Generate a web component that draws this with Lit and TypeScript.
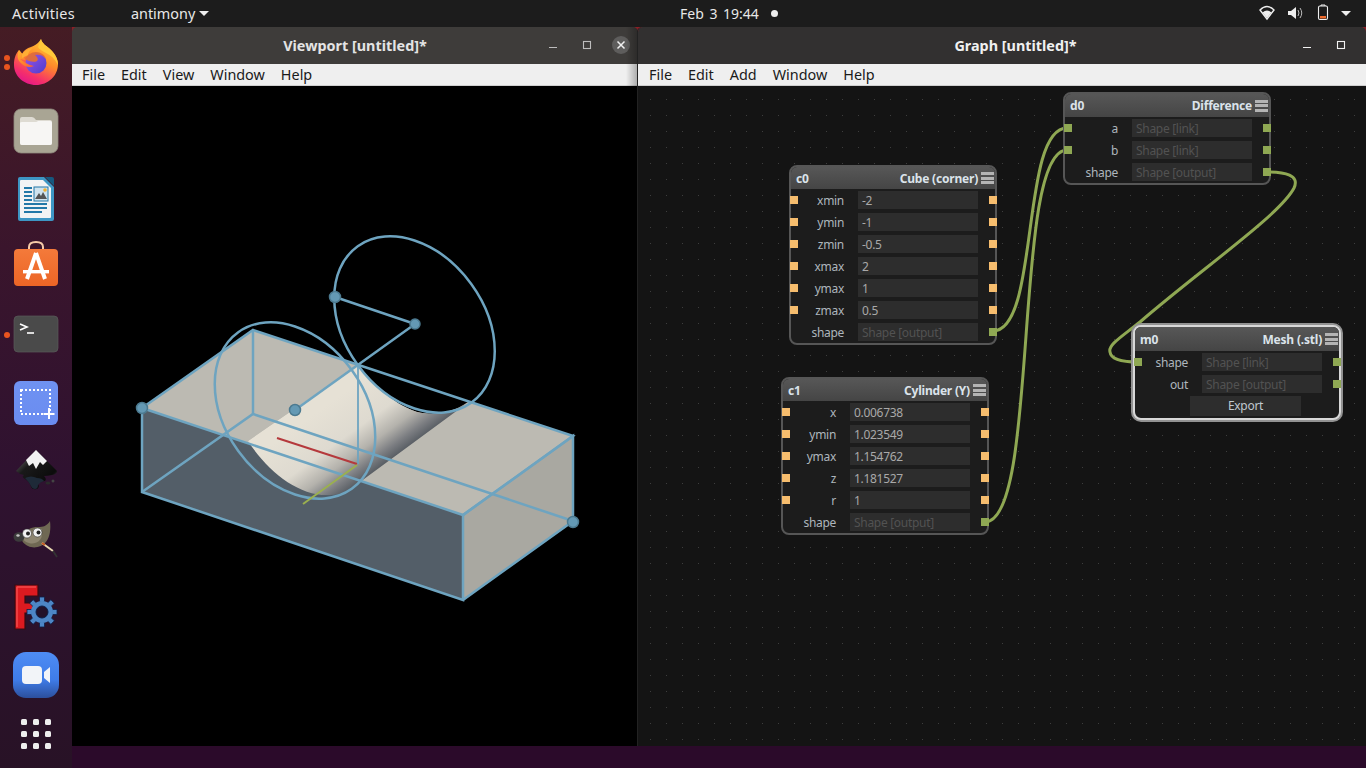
import { LitElement, html, css } from "lit";
import { customElement } from "lit/decorators.js";

type Row = { label: string; value: string; ph?: boolean; green?: boolean; noIn?: boolean };
type NodeData = { id: string; title: string; x: number; y: number; head: number; rows: Row[]; selected?: boolean; button?: string };

const LINK = (label: string, value: string): Row => ({ label, value, ph: true, green: true });
const OUT = (label: string, value: string): Row => ({ label, value, ph: true, green: true, noIn: true });
const VAL = (label: string, value: string): Row => ({ label, value });

const NODES: NodeData[] = [
  { id: "d0", title: "Difference", x: 1063, y: 92, head: 23, rows: [LINK("a", "Shape [link]"), LINK("b", "Shape [link]"), OUT("shape", "Shape [output]")] },
  { id: "c0", title: "Cube (corner)", x: 789, y: 165, head: 22, rows: [VAL("xmin", "-2"), VAL("ymin", "-1"), VAL("zmin", "-0.5"), VAL("xmax", "2"), VAL("ymax", "1"), VAL("zmax", "0.5"), OUT("shape", "Shape [output]")] },
  { id: "c1", title: "Cylinder (Y)", x: 781, y: 377, head: 22, rows: [VAL("x", "0.006738"), VAL("ymin", "1.023549"), VAL("ymax", "1.154762"), VAL("z", "1.181527"), VAL("r", "1"), OUT("shape", "Shape [output]")] },
  { id: "m0", title: "Mesh (.stl)", x: 1133, y: 325, head: 24, selected: true, button: "Export", rows: [LINK("shape", "Shape [link]"), OUT("out", "Shape [output]")] },
];

const ELLIPSE = (cx: number, cy: number) => `matrix(80.25,26.75,0,-84,${cx},${cy})`;

@customElement("app-root")
export class AppRoot extends LitElement {
  static styles = css`
    :host { display: block; width: 1366px; height: 768px; overflow: hidden; font-family: "Noto Sans", sans-serif; background: #2b0a2a; }
    .topbar { height: 27px; background: #1c1c1c; color: #e8e8e8; font-size: 14.4px; display: flex; align-items: center; }
    .tb-left { display: flex; align-items: center; padding-left: 12px; width: 668px; flex: none; }
    .act { letter-spacing: .3px; }
    .app { margin-left: 56px; display: flex; align-items: center; gap: 4px; }
    .caret { width: 0; height: 0; border-left: 5px solid transparent; border-right: 5px solid transparent; border-top: 5px solid #eee; }
    .clock { display: flex; align-items: center; gap: 12px; word-spacing: 2px; font-size: 14px; }
    .clock i { width: 7px; height: 7px; border-radius: 50%; background: #eee; }
    .tb-right { margin-left: auto; display: flex; align-items: center; height: 27px; padding-right: 15px; }
    .tb-right svg { display: block; }
    .main { display: flex; height: 741px; }
    .dock { width: 72px; flex: none; padding-top: 2px; box-sizing: border-box; background: linear-gradient(180deg, #451c24 0%, #3a152c 30%, #2f1230 60%, #281226 100%); display: flex; flex-direction: column; }
    .dock svg { display: block; width: 72px; height: 68px; flex: none; }
    .grid9 { margin-top: 10px; display: grid; grid-template-columns: repeat(3, 6px); gap: 6px; justify-content: center; }
    .grid9 i { width: 6px; height: 6px; border-radius: 1.5px; background: #eee; }
    .desk { flex: 1; display: flex; flex-direction: column; background: linear-gradient(180deg, #8d1f27 0, #8d1f27 6px, #2b0a2a 6px); }
    .wins { display: flex; height: 719px; }
    .win { display: flex; flex-direction: column; position: relative; border-radius: 5px 5px 0 0; overflow: hidden; }
    .vp { width: 566px; }
    .gr { width: 728px; box-shadow: -1px 0 0 #222; }
    .title { height: 37px; flex: none; display: flex; align-items: center; justify-content: center; color: #f0f0f0; font-weight: 700; font-size: 14.4px; position: relative; }
    .vp .title { background: #3e3c3a; color: #e4e4e4; }
    .gr .title { background: #323030; padding-left: 27px; }
    .wbtns { position: absolute; inset: 0; pointer-events: none; }
    .menu { height: 22px; flex: none; background: #efefef; border-bottom: 1px solid #cfcfcf; box-sizing: border-box; display: flex; gap: 16px; padding-left: 10px; align-items: center; color: #1a1a1a; font-size: 14.4px; }
    .gr .menu { padding-left: 11px; }
    .canvas { flex: 1; position: relative; }
    .vp .canvas { background: #000; }
    .vp .canvas svg { position: absolute; inset: 0; width: 566px; height: 660px; display: block; }
    .shade { position: absolute; top: 0; right: 0; width: 12px; height: 59px; background: linear-gradient(90deg, rgba(0,0,0,0), rgba(0,0,0,.3)); }
    .gr .canvas { background-color: #141414; }
    .dots { position: absolute; inset: 0; background-image: radial-gradient(circle at 0.5px 0.5px, #3e3e3e 0.6px, transparent 0.7px); background-size: 16px 16px; background-position: 12px 13px; }
    .wires { position: absolute; inset: 0; width: 728px; height: 660px; display: block; }
    .node { position: absolute; width: 208px; box-sizing: border-box; background: #1c1c1c; border: 2px solid #565656; border-radius: 8px; color: #aeb6bd; font-size: 12px; letter-spacing: -.3px; }
    .node.sel { border-color: #d8d8d8; box-shadow: 0 0 0 2px #929292; }
    .head { display: flex; align-items: center; padding: 0 1px 0 5px; background: linear-gradient(180deg, #575757, #454545); border-radius: 6px 6px 0 0; color: #dbe3ea; font-weight: 700; font-size: 12px; letter-spacing: -.2px; }
    .head .ttl { margin-left: auto; margin-right: 3px; }
    .burger { width: 13px; height: 12px; display: flex; flex-direction: column; justify-content: space-between; }
    .burger i { height: 3px; background: #b4b4b4; display: block; }
    .rows { display: flex; flex-direction: column; gap: 4px; padding: 2px 0; }
    .row { display: flex; align-items: center; height: 18px; margin: 0 -2px 0 -1px; position: relative; }
    .port { width: 8px; height: 8px; flex: none; background: #f6bd6e; }
    .port.g { background: #8fa853; }
    .port.none { background: transparent; }
    .lbl { flex: 1; text-align: right; margin-right: 14px; line-height: 17px; padding-top: 1px; }
    .inp { width: 120px; height: 18px; flex: none; box-sizing: border-box; background: #2d2d2d; padding: 1px 0 0 4px; line-height: 17px; margin-right: 11px; color: #a9a9a9; }
    .inp.ph { color: #525252; }
    .btn { width: 111px; height: 20px; margin: -1px 0 0 55px; background: #2d2d2d; color: #c0c8cf; text-align: center; line-height: 20px; }
    .strip { height: 22px; }
  `;

  renderNode(n: NodeData) {
    return html`<div class="node ${n.selected ? "sel" : ""}" style="left:${n.x - 638}px;top:${n.y - 86}px">
      <div class="head" style="height:${n.head}px"><span>${n.id}</span><span class="ttl">${n.title}</span><span class="burger"><i></i><i></i><i></i></span></div>
      <div class="rows">
        ${n.rows.map((r) => html`<div class="row">
          <span class="port ${r.noIn ? "none" : r.green ? "g" : ""}"></span>
          <span class="lbl">${r.label}</span>
          <span class="inp ${r.ph ? "ph" : ""}">${r.value}</span>
          <span class="port ${r.green ? "g" : ""}"></span>
        </div>`)}
        ${n.button ? html`<div class="btn">${n.button}</div>` : ""}
      </div>
    </div>`;
  }

  dock() {
    return html`<div class="dock">
      <!-- firefox -->
      <svg viewBox="0 0 72 68">
        <defs>
          <linearGradient id="ff1" x1="0.8" y1="0" x2="0.3" y2="1"><stop offset="0" stop-color="#ffd43a"/><stop offset=".45" stop-color="#ff8a2a"/><stop offset=".8" stop-color="#f5306a"/><stop offset="1" stop-color="#e3178a"/></linearGradient>
          <linearGradient id="ff2" x1="0" y1="0" x2="1" y2="1"><stop offset="0" stop-color="#9a55e8"/><stop offset="1" stop-color="#4d3ccc"/></linearGradient>
          <linearGradient id="ff3" x1="0" y1="0" x2="1" y2="1"><stop offset="0" stop-color="#ffb52e"/><stop offset="1" stop-color="#ff5a2e"/></linearGradient>
        </defs>
        <circle cx="7" cy="29" r="3" fill="#e9541f"/><circle cx="7" cy="38" r="3" fill="#e9541f"/>
        <path d="M41 10 C42 15 47 17 51 21 C56 26 58 31 58 35 C58 47 48 56 36 56 C24 56 14 47 14 36 C14 30 15 26 19 21 L22 25 C24 21 27 19 31 18 C34 17 38 15 41 10Z" fill="url(#ff1)"/>
        <path d="M41 10 C42 15 47 17 51 21 C56 26 58 31 58 36 C55 30 51 26 46 24 C42 22 39 20 38 18 C39 16 40 13 41 10Z" fill="#ffc93a"/>
        <circle cx="36" cy="34" r="10.500" fill="url(#ff2)"/>
        <path d="M36 23 C41 23 45 26 46 30 C43 26 39 25 35 26 C37 28 39 30 37 32 C34 34 28 32 25 30 C27 26 31 23 36 23Z" fill="#e8702e" opacity=".9"/>
        <path d="M19 21 C22 24 24 27 25 31 L20 30 C24 33 28 36 34 37 C28 40 21 36 18 30 C17 27 18 24 19 21Z" fill="url(#ff3)"/>
        <path d="M22 25 C25 21 29 19 33 19 C30 21 28 24 28 26 C26 27 24 28 22 29Z" fill="#ffae35"/>
      </svg>
      <!-- files -->
      <svg viewBox="0 0 72 68">
        <rect x="14" y="12" width="44" height="44" rx="7" fill="#a9a594" stroke="#8f8c7e" stroke-width=".8"/>
        <path d="M20 22 Q20 20 22 20 H32 Q34 20 36 23 H50 Q52 23 52 25 V46 Q52 48 50 48 H22 Q20 48 20 46Z" fill="#dedbd2"/>
        <path d="M20 26 Q20 25 22 25 L36 25 Q37 25 38 24 H50 Q52 24 52 26 V46 Q52 48 50 48 H22 Q20 48 20 46Z" fill="#f7f6f4"/>
      </svg>
      <!-- writer -->
      <svg viewBox="0 0 72 68">
        <path d="M20 12 H44 L54 22 V54 Q54 56 52 56 H20 Q18 56 18 54 V14 Q18 12 20 12Z" fill="#3d96c4"/>
        <path d="M21 15 H43 L51 23 V52 Q51 53 50 53 H21 Q20 53 20 52 V16 Q20 15 21 15Z" fill="#f2f3f4"/>
        <path d="M45 12 H52 Q54 12 54 14 V21Z" fill="#16587f"/>
        <path d="M24 23 H32 M24 27 H32 M24 31 H32 M24 35 H32 M24 39 H47 M24 43 H47 M24 47 H42" stroke="#2278a8" stroke-width="2"/>
        <rect x="34" y="22" width="14" height="14" fill="#cfe3ee" stroke="#2278a8"/>
        <path d="M35 34 L39 28 L41 31 L43 27 L47 34Z" fill="#555"/><circle cx="45" cy="25" r="1.800" fill="#f0b030"/>
      </svg>
      <!-- software -->
      <svg viewBox="0 0 72 68">
        <defs><linearGradient id="sw" x1="0" y1="0" x2="0" y2="1"><stop offset="0" stop-color="#f47a3a"/><stop offset="1" stop-color="#ec6526"/></linearGradient></defs>
        <path d="M29 17 V14 Q29 9 36 9 Q43 9 43 14 V17" fill="none" stroke="#f6cba8" stroke-width="2"/>
        <rect x="14" y="16" width="44" height="37" rx="4" fill="url(#sw)"/>
        <path d="M36 20 L27 46 M36 20 L45 46" stroke="#fff" stroke-width="4" fill="none"/>
        <rect x="23" y="37" width="26" height="3.400" fill="#fff"/>
      </svg>
      <!-- terminal -->
      <svg viewBox="0 0 72 68">
        <rect x="14" y="15" width="44" height="36" rx="4" fill="#4a4a4a" stroke="#5a5a5a" stroke-width=".7"/>
        <path d="M20 23 L27 26 L20 29" fill="none" stroke="#fff" stroke-width="1.600"/>
        <path d="M27 32 H34" stroke="#fff" stroke-width="1.600"/>
        <circle cx="7" cy="34" r="3" fill="#e9541f"/>
      </svg>
      <!-- screenshot -->
      <svg viewBox="0 0 72 68">
        <defs><linearGradient id="ss" x1="0" y1="0" x2="0" y2="1"><stop offset="0" stop-color="#6f92f2"/><stop offset="1" stop-color="#6a8cf0"/></linearGradient></defs>
        <rect x="14" y="12" width="44" height="44" rx="6" fill="url(#ss)"/>
        <rect x="21" y="21" width="29" height="24" fill="none" stroke="#fff" stroke-width="2" stroke-dasharray="2 2"/>
        <path d="M49 39 V50 M43.500 45 H54.500" stroke="#fff" stroke-width="2"/>
      </svg>
      <!-- inkscape -->
      <svg viewBox="0 0 72 68">
        <defs><linearGradient id="ik" x1="0" y1="0" x2="1" y2="1"><stop offset="0" stop-color="#8a8a8a"/><stop offset=".35" stop-color="#1a1a1a"/><stop offset=".75" stop-color="#0c0c0c"/><stop offset="1" stop-color="#6a6a6a"/></linearGradient></defs>
        <path d="M36 13 L57 34 Q57 37 52 38 Q47 39 44 39 Q47 42 45 44 Q40 44 38 47 Q40 50 37 52 Q32 53 31 50 Q30 45 25 42 Q21 40 24 38 Q19 37 16 34Z" fill="url(#ik)"/>
        <path d="M36 13 L47 24 L43 28 L40 25 L36 32 L33 26 L29 29 L26 23Z" fill="#f2f2f2"/>
        <path d="M25 41 Q31 38 37 41 Q42 41 44 44 Q40 45 38 48 Q38 52 35 52 Q32 52 31 49 Q29 45 25 41Z" fill="#1e2a38"/>
        <ellipse cx="48" cy="46" rx="2.500" ry="1.500" fill="#2a2a2a"/><circle cx="53" cy="44" r="1.500" fill="#444"/>
      </svg>
      <!-- gimp -->
      <svg viewBox="0 0 72 68">
        <path d="M50 16 C51 24 50 32 46 37 C42 42 34 44 28 41 C24 39 21 36 21 31 C26 24 32 22 38 22 C43 22 47 21 50 16Z" fill="#6f6853"/>
        <path d="M22 31 C28 24 38 24 42 29 C42 36 35 40 29 38 C25 37 22 34 22 31Z" fill="#8d8570"/>
        <ellipse cx="19" cy="32" rx="5.500" ry="4.800" fill="#3b3b3b"/><ellipse cx="18" cy="30.500" rx="1.700" ry="1.200" fill="#c4c4c4"/>
        <circle cx="27" cy="28.500" r="4.500" fill="#f2f2f2" stroke="#333" stroke-width=".6"/><circle cx="28" cy="28.500" r="2" fill="#222"/>
        <circle cx="37.500" cy="27.500" r="4.500" fill="#f2f2f2" stroke="#333" stroke-width=".6"/><circle cx="38.500" cy="27.500" r="2" fill="#222"/>
        <path d="M42 38 L53 46" stroke="#e8d8b0" stroke-width="2"/><path d="M53 46 L57 52" stroke="#333" stroke-width="1.800"/><path d="M42 38 L45 40" stroke="#c85a20" stroke-width="2"/>
      </svg>
      <!-- freecad -->
      <svg viewBox="0 0 72 68">
        <path d="M15 12 H38 V23 H25 V30 H33 V40 H25 V56 H15Z" fill="#dc1a20" stroke="#3a0a12" stroke-width="1.200"/>
        <path d="M17 14 H36 M17 14 V54" stroke="#f24a4a" stroke-width="1.500"/>
        <g transform="translate(42 39)">
          <g fill="#4d86c6" stroke="#0e1f48" stroke-width=".8">
            <rect x="-2.500" y="-15" width="5" height="5"/><rect x="-2.500" y="10" width="5" height="5"/><rect x="-15" y="-2.500" width="5" height="5"/><rect x="10" y="-2.500" width="5" height="5"/>
            <rect x="-2.500" y="-15" width="5" height="5" transform="rotate(45)"/><rect x="-2.500" y="10" width="5" height="5" transform="rotate(45)"/><rect x="-15" y="-2.500" width="5" height="5" transform="rotate(45)"/><rect x="10" y="-2.500" width="5" height="5" transform="rotate(45)"/>
          </g>
          <circle r="11" fill="#4d86c6"/>
          <circle r="6" fill="#23122a" stroke="#0e1f48" stroke-width="1"/>
        </g>
      </svg>
      <!-- zoom -->
      <svg viewBox="0 0 72 68">
        <defs><linearGradient id="zm" x1="0" y1="0" x2="0" y2="1"><stop offset="0" stop-color="#4e8cf4"/><stop offset=".6" stop-color="#3f7ce8"/><stop offset="1" stop-color="#2c4f9c"/></linearGradient></defs>
        <rect x="13" y="11" width="46" height="46" rx="13" fill="url(#zm)"/>
        <rect x="22" y="25" width="20" height="18" rx="4" fill="#f2f4f8"/>
        <path d="M44 31 L50 26 V42 L44 37Z" fill="#f2f4f8"/>
      </svg>
      <div class="grid9">${Array.from({ length: 9 }, () => html`<i></i>`)}</div>
    </div>`;
  }

  viewport() {
    const A = "142,408", B = "253,330", C = "573,436", D = "463,515", E = "142,492", F = "463,600", G = "573,521", H = "253,414";
    const blue = "#6ea4c0";
    return html`<svg viewBox="72 86 566 660">
      <defs>
        <linearGradient id="cyl" gradientUnits="userSpaceOnUse" x1="312.500" y1="415.400" x2="360" y2="481">
          <stop offset="0" stop-color="#e6e1d5"/><stop offset=".45" stop-color="#dedad0"/><stop offset=".7" stop-color="#b4b2ac"/><stop offset=".88" stop-color="#7c7e82"/><stop offset="1" stop-color="#5b6066"/>
        </linearGradient>
      </defs>
      <polygon points="${A} ${B} ${C} ${D}" fill="#bcbab2"/>
      <polygon points="${A} ${D} ${F} ${E}" fill="#535e68"/>
      <polygon points="${D} ${C} ${G} ${F}" fill="#a9a8a1"/>
      <path d="M358 365 C368 380 392 404 417 412 C434 416 452 413 468 402 L500 340 L370 330Z" fill="#000"/>
      <path d="M248 441 L358 365 C368 380 392 404 417 412 C434 416 452 413 466 404 L360 482 C352 489 342 495 330 495 C300 497 268 472 248 441Z" fill="url(#cyl)"/>
      <polygon points="${A} ${B} 358,365 248,441" fill="#bcbab2"/>
      <g fill="none" stroke="${blue}" stroke-width="2.500">
        <polyline points="${A} ${B} ${C} ${D} ${A}"/>
        <polyline points="${A} ${E} ${F} ${D}"/>
        <polyline points="${D} ${C} ${G} ${F}"/>
        <polyline points="${E} ${H} ${G}"/>
        <line x1="253" y1="330" x2="253" y2="414"/>
        <ellipse cx="0" cy="0" rx="1" ry="1" transform="${ELLIPSE(295, 410.5)}" vector-effect="non-scaling-stroke"/>
        <ellipse cx="0" cy="0" rx="1" ry="1" transform="${ELLIPSE(414.5, 324.5)}" vector-effect="non-scaling-stroke"/>
        <line x1="335" y1="297" x2="415" y2="324"/>
        <line x1="415" y1="324" x2="295" y2="410"/>
        <line x1="358" y1="365" x2="358" y2="464" stroke-width="1.800"/>
      </g>
      <line x1="277" y1="438" x2="357" y2="464" stroke="#b5393c" stroke-width="2"/>
      <line x1="357" y1="465" x2="303" y2="504" stroke="#9bb04f" stroke-width="2"/>
      <g fill="#6499b4" stroke="#4c7a90" stroke-width="1.500">
        <circle cx="142" cy="408" r="5.500"/><circle cx="335" cy="297" r="5.500"/><circle cx="415" cy="324" r="5"/><circle cx="295" cy="410" r="5.500"/><circle cx="573" cy="522" r="5.500"/>
      </g>
    </svg>`;
  }

  render() {
    return html`
      <div class="topbar">
        <div class="tb-left"><span class="act">Activities</span><span class="app">antimony<span class="caret"></span></span></div>
        <div class="clock"><span>Feb 3 19:44</span><i></i></div>
        <div class="tb-right">
          <svg width="92" height="27" viewBox="1259 0 92 27">
            <path d="M1260 10 Q1267 3 1274 10 L1267 19Z" fill="none" stroke="#eee" stroke-width="1.400"/>
            <path d="M1262.500 12.500 Q1267 8.500 1271.500 12.500 L1267 18Z" fill="#eee"/>
            <path d="M1288 11 H1291 L1296 7 V19 L1291 15 H1288Z" fill="#eee"/>
            <path d="M1298 10 Q1300 13 1298 16 M1300 8 Q1303.500 13 1300 18" fill="none" stroke="#bbb" stroke-width="1"/>
            <path d="M1321 6 V5 H1325 V6" fill="none" stroke="#eee"/>
            <rect x="1318.500" y="6" width="9" height="13.500" rx="1.500" fill="none" stroke="#eee" stroke-width="1.100"/>
            <rect x="1320" y="16" width="6" height="2.500" fill="#ee6a2c"/>
            <path d="M1341 11 H1351 L1346 16Z" fill="#eee"/>
          </svg>
        </div>
      </div>
      <div class="main">
        ${this.dock()}
        <div class="desk">
          <div class="wins">
            <div class="win vp">
              <div class="title">Viewport [untitled]*
                <svg class="wbtns" width="566" height="37" viewBox="72 27 566 37">
                  <path d="M549 47.500 H557" stroke="#bdbdbd" stroke-width="1.200"/>
                  <rect x="583.500" y="41.500" width="7" height="7" fill="none" stroke="#bdbdbd" stroke-width="1.100"/>
                  <circle cx="621" cy="45" r="9" fill="#5e5d5c"/>
                  <path d="M617.500 41.500 L624.500 48.500 M624.500 41.500 L617.500 48.500" stroke="#f0f0f0" stroke-width="1.500"/>
                </svg>
              </div>
              <div class="menu"><span>File</span><span>Edit</span><span>View</span><span>Window</span><span>Help</span></div>
              <div class="canvas">${this.viewport()}</div>
              <div class="shade"></div>
            </div>
            <div class="win gr">
              <div class="title">Graph [untitled]*
                <svg class="wbtns" width="728" height="37" viewBox="638 27 728 37">
                  <path d="M1303 47.500 H1311" stroke="#f2f2f2" stroke-width="1.200"/>
                  <rect x="1337.500" y="41.500" width="7" height="7" fill="none" stroke="#f2f2f2" stroke-width="1.100"/>
                </svg>
              </div>
              <div class="menu"><span>File</span><span>Edit</span><span>Add</span><span>Window</span><span>Help</span></div>
              <div class="canvas">
                <div class="dots"></div>
                <svg class="wires" viewBox="638 86 728 660">
                  <g fill="none" stroke="#8fa853" stroke-width="3">
                    <path d="M993 331 C1040 331 1020 128 1067 128"/>
                    <path d="M985 522 C1040 522 1012 150 1067 150"/>
                    <path d="M1267 172 C1285 172 1300 175 1294 188 C1280 215 1200 270 1140 322 C1120 338 1108 345 1110 352 C1111 360 1125 362 1138 362"/>
                  </g>
                </svg>
                ${NODES.map((n) => this.renderNode(n))}
              </div>
            </div>
          </div>
          <div class="strip"></div>
        </div>
      </div>
    `;
  }
}
